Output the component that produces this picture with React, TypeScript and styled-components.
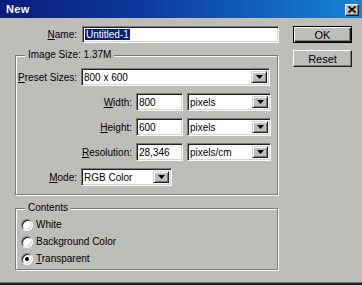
import styled, { createGlobalStyle } from 'styled-components';

const Global = createGlobalStyle`
  html, body { margin: 0; padding: 0; background: #bdbeb9; }
  body { font-family: "Liberation Sans", Arial, sans-serif; font-size: 10px; color: #000; }
`;

const Window = styled.div`
  width: 362px;
  height: 285px;
  box-sizing: border-box;
  background: #bdbeb9;
  border-bottom: 2px solid #202020;
  box-shadow: inset 0 -1px 0 #7b7c78;
  display: flex;
  flex-direction: column;
  overflow: hidden;
`;

const TitleBar = styled.div`
  height: 18px;
  flex-shrink: 0;
  display: flex;
  align-items: center;
  justify-content: space-between;
  padding: 0 3px 0 6px;
  background: linear-gradient(90deg, #0a1c7c 0%, #0d3a9e 40%, #1584d6 100%);
`;

const Title = styled.span`
  color: #fff;
  font-weight: 700;
  font-size: 11px;
  letter-spacing: 0.3px;
`;

const CloseBtn = styled.div`
  width: 14px;
  height: 12px;
  box-sizing: border-box;
  margin-top: 1px;
  background: #bdbeb9;
  border: 1px solid;
  border-color: #fff #202020 #202020 #fff;
  box-shadow: inset -1px -1px 0 #7b7c78;
  display: flex;
  align-items: center;
  justify-content: center;
`;

const Body = styled.div`
  display: flex;
  padding: 8px 0 0 15px;
  gap: 14px;
`;

const FormCol = styled.div`
  width: 264px;
  display: flex;
  flex-direction: column;
`;

const ButtonCol = styled.div`
  display: flex;
  flex-direction: column;
  gap: 7px;
`;

const Row = styled.div<{ $gap?: number; $h?: number }>`
  display: flex;
  align-items: center;
  height: ${(p) => p.$h ?? 18}px;
  gap: ${(p) => p.$gap ?? 4}px;
`;

const Label = styled.label<{ $w: number }>`
  width: ${(p) => p.$w}px;
  text-align: right;
  white-space: nowrap;
  flex-shrink: 0;
`;

const Field = styled.div<{ $w: number; $h?: number }>`
  width: ${(p) => p.$w}px;
  height: ${(p) => p.$h ?? 18}px;
  box-sizing: border-box;
  background: #fff;
  border: 1px solid;
  border-color: #7b7c78 #fff #fff #7b7c78;
  box-shadow: inset 1px 1px 0 #202020, inset -1px -1px 0 #d4d4d0;
  display: flex;
  align-items: center;
  padding-left: 2px;
  white-space: nowrap;
  overflow: hidden;
`;

const Selected = styled.span`
  background: #0a1c7c;
  color: #fff;
  padding: 0 1px;
`;

const SelectBox = styled(Field)`
  justify-content: space-between;
  padding-right: 2px;
`;

const ArrowBtn = styled.div`
  width: 16px;
  height: 12px;
  box-sizing: border-box;
  background: #bdbeb9;
  border: 1px solid;
  border-color: #d4d4d0 #202020 #202020 #d4d4d0;
  box-shadow: inset 1px 1px 0 #fff, inset -1px -1px 0 #7b7c78;
  display: flex;
  align-items: center;
  justify-content: center;
`;

const Group = styled.div<{ $h: number; $top: number }>`
  position: relative;
  margin-top: ${(p) => p.$top}px;
  width: 263px;
  height: ${(p) => p.$h}px;
  box-sizing: border-box;
  border: 1px solid #7b7c78;
  box-shadow: inset 1px 1px 0 #fff, 1px 1px 0 #fff;
  display: flex;
  flex-direction: column;
`;

const Legend = styled.span`
  position: absolute;
  top: -7px;
  left: 9px;
  padding: 0 3px;
  background: #bdbeb9;
  line-height: 12px;
`;

const SizeRows = styled.div`
  display: flex;
  flex-direction: column;
  gap: 7px;
  padding-top: 12px;
`;

const RadioList = styled.div`
  display: flex;
  flex-direction: column;
  padding: 7px 0 0 5px;
`;

const RadioRow = styled.div`
  display: flex;
  align-items: center;
  gap: 3px;
  height: 17px;
`;

const RadioDot = styled.span<{ $on?: boolean }>`
  width: 12px;
  height: 12px;
  box-sizing: border-box;
  border-radius: 50%;
  background: #fff;
  border: 1px solid;
  border-color: #7b7c78 #fff #fff #7b7c78;
  box-shadow: inset 1px 1px 0 #202020, inset -1px -1px 0 #d4d4d0;
  display: flex;
  align-items: center;
  justify-content: center;
  &::after {
    content: "";
    width: 4px;
    height: 4px;
    border-radius: 50%;
    background: ${(p) => (p.$on ? '#000' : 'transparent')};
  }
`;

const Button = styled.div<{ $default?: boolean }>`
  width: 59px;
  height: 17px;
  box-sizing: border-box;
  background: #bdbeb9;
  display: flex;
  align-items: center;
  justify-content: center;
  font-size: 11px;
  border: 1px solid;
  border-color: ${(p) => (p.$default ? '#000' : '#fff #202020 #202020 #fff')};
  box-shadow: ${(p) =>
    p.$default
      ? 'inset 1px 1px 0 #fff, inset -1px -1px 0 #202020, inset -2px -2px 0 #7b7c78'
      : 'inset -1px -1px 0 #7b7c78'};
`;

const Arrow = () => (
  <svg width="7" height="4" viewBox="0 0 7 4">
    <path d="M0 0h7L3.5 4z" fill="#000" />
  </svg>
);

function Select({ w, value }: { w: number; value: string }) {
  return (
    <SelectBox $w={w}>
      <span>{value}</span>
      <ArrowBtn>
        <Arrow />
      </ArrowBtn>
    </SelectBox>
  );
}

const sizeRows = [
  { key: 'W', rest: 'idth:', value: '800', unit: 'pixels' },
  { key: 'H', rest: 'eight:', value: '600', unit: 'pixels' },
  { key: 'R', rest: 'esolution:', value: '28,346', unit: 'pixels/cm' },
];

export default function App() {
  return (
    <>
      <Global />
      <Window>
        <TitleBar>
          <Title>New</Title>
          <CloseBtn>
            <svg width="8" height="7" viewBox="0 0 8 7">
              <path d="M0.5 0.5L7.5 6.5M7.5 0.5L0.5 6.5" stroke="#000" strokeWidth="1.7" />
            </svg>
          </CloseBtn>
        </TitleBar>
        <Body>
          <FormCol>
            <Row $gap={5} $h={17}>
              <Label $w={62}><u>N</u>ame:</Label>
              <Field $w={197} $h={17}><Selected>Untitled-1</Selected></Field>
            </Row>

            <Group $h={140} $top={12}>
              <Legend>Image Size: 1.37M</Legend>
              <SizeRows>
                <Row>
                  <Label $w={61}><u>P</u>reset Sizes:</Label>
                  <Select w={189} value="800 x 600" />
                </Row>
                {sizeRows.map((r) => (
                  <Row key={r.key}>
                    <Label $w={116}><u>{r.key}</u>{r.rest}</Label>
                    <Field $w={47}>{r.value}</Field>
                    <Select w={84} value={r.unit} />
                  </Row>
                ))}
                <Row>
                  <Label $w={61}><u>M</u>ode:</Label>
                  <Select w={91} value="RGB Color" />
                </Row>
              </SizeRows>
            </Group>

            <Group $h={62} $top={13}>
              <Legend>Contents</Legend>
              <RadioList>
                <RadioRow>
                  <RadioDot />
                  <span>White</span>
                </RadioRow>
                <RadioRow>
                  <RadioDot />
                  <span>Background Color</span>
                </RadioRow>
                <RadioRow>
                  <RadioDot $on />
                  <span><u>T</u>ransparent</span>
                </RadioRow>
              </RadioList>
            </Group>
          </FormCol>

          <ButtonCol>
            <Button $default>OK</Button>
            <Button>Reset</Button>
          </ButtonCol>
        </Body>
      </Window>
    </>
  );
}
